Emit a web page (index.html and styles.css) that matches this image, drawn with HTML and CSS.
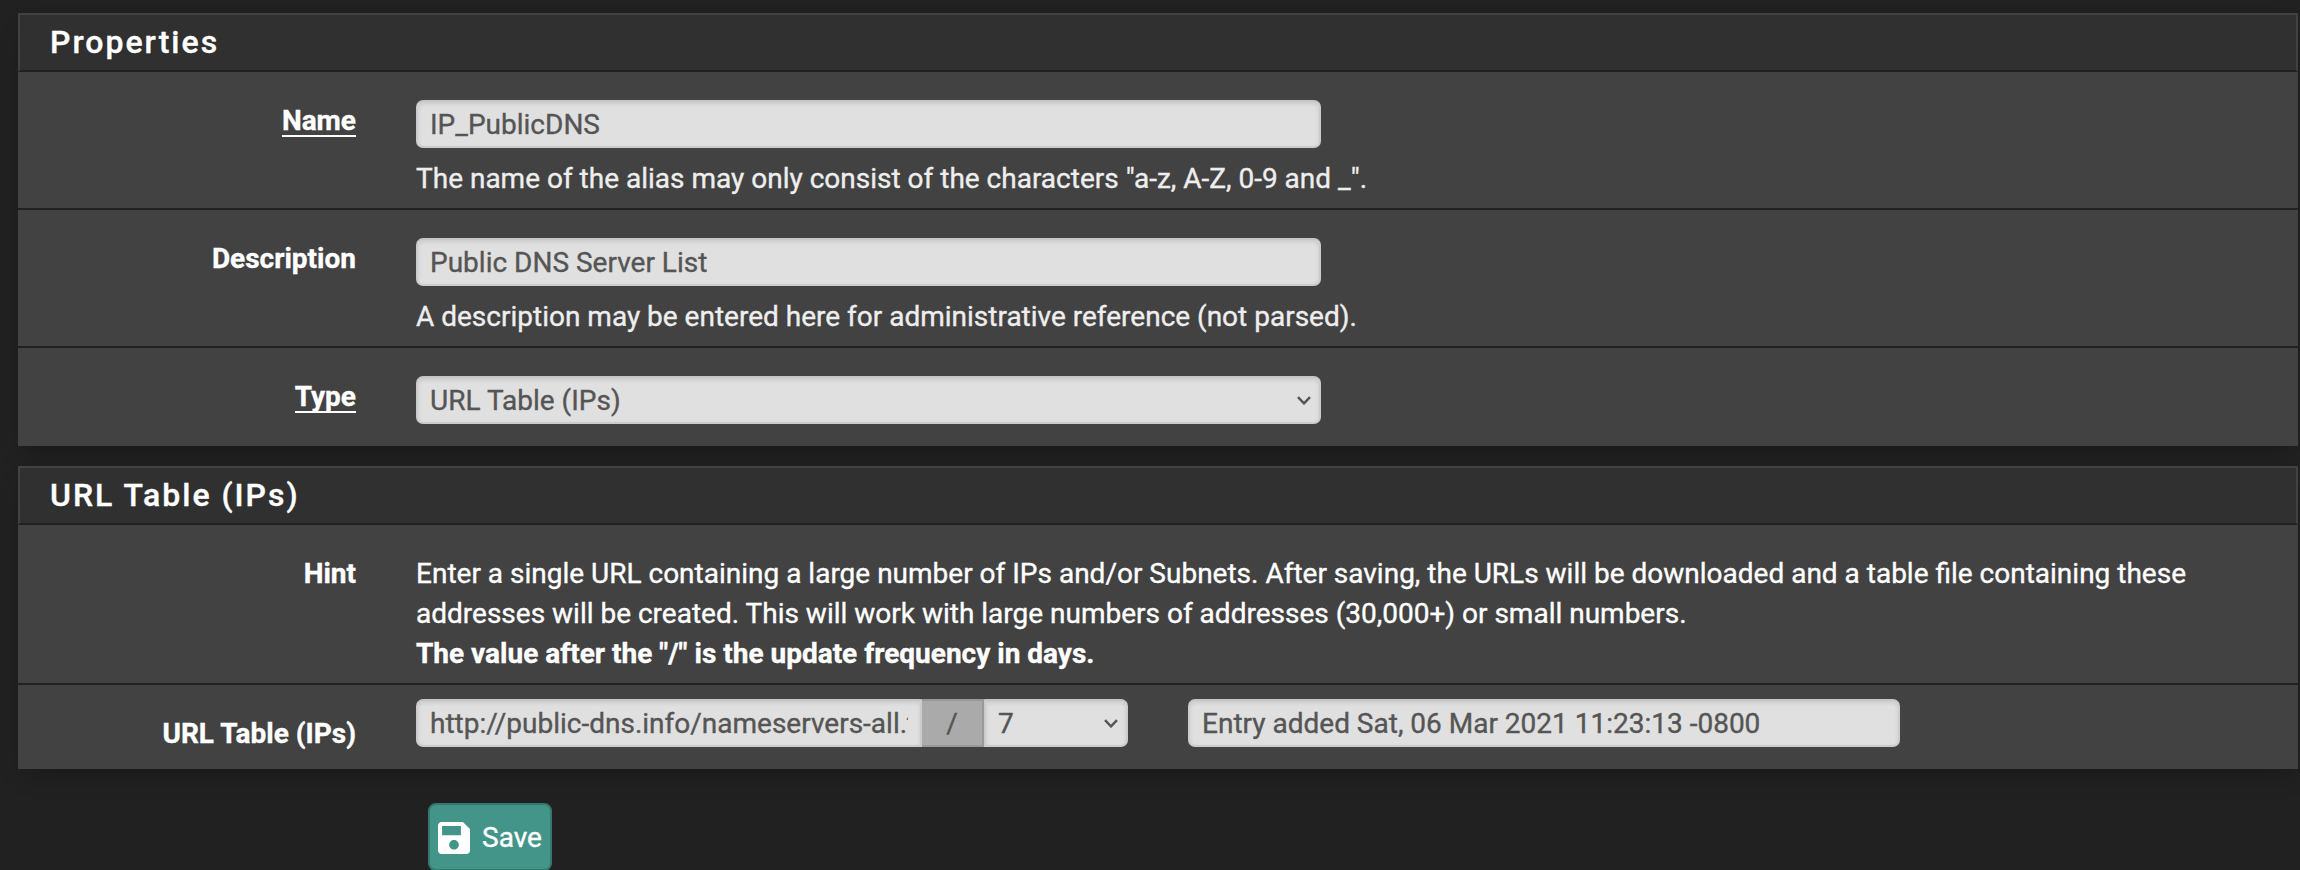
FILE: index.html
```html
<!DOCTYPE html>
<html lang="en">
<head>
<meta charset="utf-8">
<title>Alias Edit</title>
<link rel="stylesheet" href="styles.css">
</head>
<body>
<form class="page">
  <section class="panel">
    <h2 class="panel-heading">Properties</h2>
    <div class="row">
      <label class="label"><span class="required">Name</span></label>
      <div class="field">
        <div class="control">IP_PublicDNS</div>
        <p class="help">The name of the alias may only consist of the characters "a-z, A-Z, 0-9 and _".</p>
      </div>
    </div>
    <div class="row">
      <label class="label">Description</label>
      <div class="field">
        <div class="control">Public DNS Server List</div>
        <p class="help">A description may be entered here for administrative reference (not parsed).</p>
      </div>
    </div>
    <div class="row row-type">
      <label class="label"><span class="required">Type</span></label>
      <div class="field">
        <div class="control select">URL Table (IPs)
          <svg class="chevron" viewBox="0 0 14 9"><path d="M1 1.2 7 7.4 13 1.2"/></svg>
        </div>
      </div>
    </div>
  </section>

  <section class="panel">
    <h2 class="panel-heading">URL Table (IPs)</h2>
    <div class="row row-hint">
      <label class="label">Hint</label>
      <div class="hint">Enter a single URL containing a large number of IPs and/or Subnets. After saving, the URLs will be downloaded and a table file containing these<br>addresses will be created. This will work with large numbers of addresses (30,000+) or small numbers.<br><b>The value after the "/" is the update frequency in days.</b></div>
    </div>
    <div class="row row-url">
      <label class="label">URL Table (IPs)</label>
      <div class="group">
        <div class="control url"><span class="clip">http://public-dns.info/nameservers-all.txt</span></div>
        <div class="addon">/</div>
        <div class="control select days">7
          <svg class="chevron" viewBox="0 0 14 9"><path d="M1 1.2 7 7.4 13 1.2"/></svg>
        </div>
      </div>
      <div class="control entry">Entry added Sat, 06 Mar 2021 11:23:13 -0800</div>
    </div>
  </section>

  <button class="save" type="button">
    <svg class="save-icon" viewBox="3 3 18 18"><path fill-rule="evenodd" d="M17 3H5c-1.11 0-2 .9-2 2v14c0 1.1.89 2 2 2h14c1.1 0 2-.9 2-2V7l-4-4zm-5 15.5c-1.5 0-2.7-1.2-2.7-2.7s1.2-2.7 2.7-2.7 2.7 1.2 2.7 2.7-1.2 2.7-2.7 2.7zM15.9 10.4H5.3V5.3h10.6z"/></svg>
    <span>Save</span>
  </button>
</form>
</body>
</html>
```
FILE: styles.css
```css
* { box-sizing: border-box; }
html { height: 870px; overflow: hidden; }
body {
  margin: 0;
  height: 870px;
  overflow: hidden;
  background: #212121;
  color: #fff;
  font: 28px/40px Roboto, sans-serif;
  -webkit-text-stroke: .35px currentColor;
}
.page { padding: 13px 2px 0 18px; }
.panel {
  margin-bottom: 20px;
  background: #424242;
  box-shadow: 0 12px 24px -8px rgba(0, 0, 0, .3);
}
.panel-heading {
  margin: 0;
  height: 59px;
  padding: 0 30px;
  border: 2px solid #424242;
  border-bottom-color: #212121;
  background: #303030;
  font-size: 32px;
  font-weight: 500;
  line-height: 55px;
  letter-spacing: 2px;
}
.row {
  display: flex;
  height: 138px;
  padding-top: 28px;
  border-bottom: 2px solid #212121;
}
.row:last-child { border-bottom: 0; }
.row-type { height: 98px; }
.row-hint { height: 160px; }
.row-url { height: 84px; padding-top: 14px; }
.label {
  flex: none;
  width: 338px;
  margin-right: 60px;
  padding-top: 1px;
  text-align: right;
  font-weight: 700;
}
.required {
  display: inline-block;
  height: 36px;
  border-bottom: 2px solid #fff;
}
.control {
  display: flex;
  align-items: center;
  width: 905px;
  height: 48px;
  padding: 1px 14px 0 12px;
  border: 2px solid #ccc;
  border-top-color: #c6c6c6;
  border-radius: 7px;
  background: #e0e0e0;
  box-shadow: inset 0 2px 4px rgba(0, 0, 0, .1);
  color: #555;
}
.help { margin: 11px 0 0; color: #eee; }
.select { justify-content: space-between; padding-right: 8px; }
.chevron { width: 14px; height: 9px; fill: none; stroke: #555; stroke-width: 2.4; }
.hint { padding-top: 1px; }
.row-url .label { padding-top: 15px; }
.group { display: flex; width: 712px; margin-right: 60px; }
.url { width: 506px; padding-right: 12px; border-radius: 7px 0 0 7px; }
.clip { overflow: hidden; white-space: nowrap; }
.addon {
  width: 62px;
  height: 48px;
  border: 2px solid #999;
  border-left: 0;
  background: #aaa;
  color: #555;
  line-height: 45px;
  text-align: center;
}
.days { width: 144px; border-radius: 0 7px 7px 0; }
.entry { width: 712px; }
.save {
  display: flex;
  align-items: center;
  gap: 12px;
  width: 124px;
  height: 68px;
  margin: 34px 0 0 410px;
  padding: 2px 8px 0;
  border: 2px solid #35796e;
  border-radius: 8px;
  background: #429588;
  color: #fff;
  font: 28px/40px Roboto, sans-serif;
}
.save-icon { flex: none; width: 32px; height: 32px; fill: #fff; }
```
